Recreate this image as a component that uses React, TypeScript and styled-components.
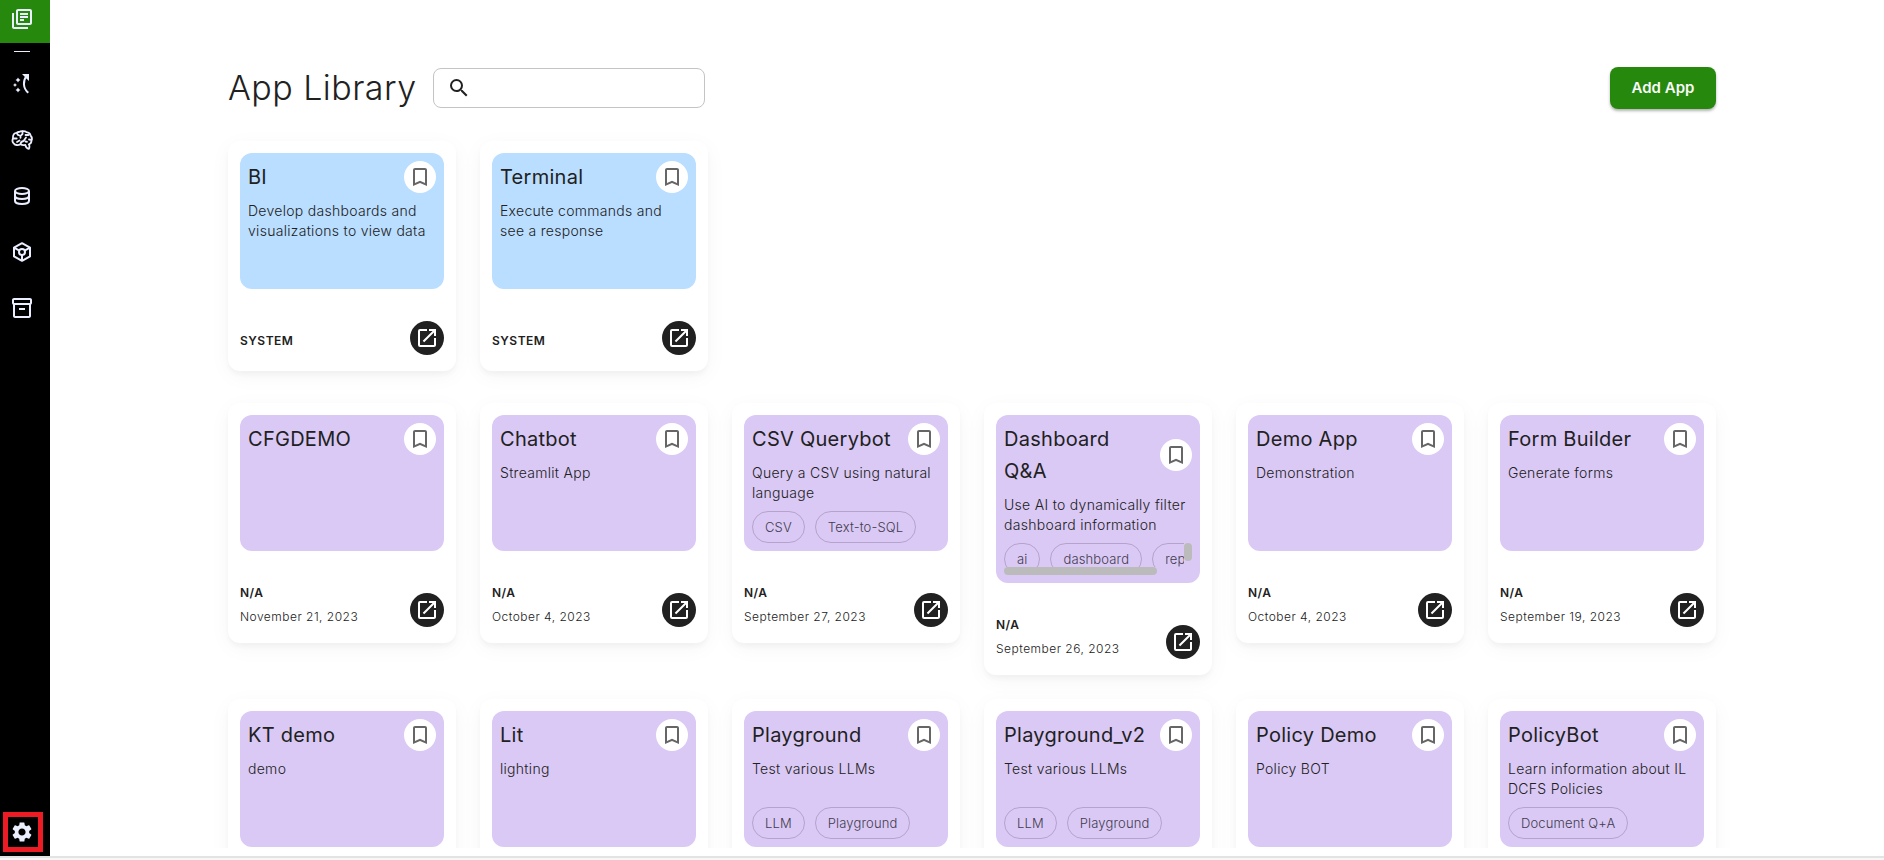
import React from 'react';
import styled, { createGlobalStyle } from 'styled-components';
import {
  MdOutlineLibraryBooks,
  MdSettings,
  MdOutlineInventory2,
  MdSearch,
  MdBookmarkBorder,
  MdOpenInNew,
} from 'react-icons/md';

const GlobalStyle = createGlobalStyle`
  *, *::before, *::after { box-sizing: border-box; }
  body {
    margin: 0;
    background: #fafafa;
    color: #212121;
    font-family: Inter, "Liberation Sans", sans-serif;
    overflow: hidden;
  }
  h1, h2, p { margin: 0; }
`;

const Page = styled.div`
  display: flex;
  flex-direction: column;
  height: 860px;
`;

const Shell = styled.div`
  display: flex;
  height: 856px;
  background: #fff;
`;

const BottomEdge = styled.div`
  height: 4px;
  background: #f7f7f7;
  border-top: 2px solid #e3e3e3;
`;

const Sidebar = styled.nav`
  display: flex;
  flex-direction: column;
  width: 50px;
  background: #000;
  color: #ebeeff;
`;

const NavItem = styled.a<{ $active?: boolean }>`
  display: flex;
  align-items: center;
  height: ${p => (p.$active ? '43px' : '56px')};
  padding: ${p => (p.$active ? '0 0 5px 10px' : '0 0 0 10px')};
  background: ${p => (p.$active ? '#26890d' : 'transparent')};
  svg { display: block; width: 24px; height: 24px; }
`;

const NavDivider = styled.hr`
  width: 16px;
  height: 1px;
  margin: 8px 0 4px 14px;
  border: 0;
  background: #ebeeff;
`;

const SettingsItem = styled.a`
  display: flex;
  align-items: center;
  justify-content: center;
  width: 40px;
  height: 40px;
  margin: auto 0 4px 3px;
  padding-right: 2px;
  border: 5px solid #ed1c24;
  svg { display: block; flex: none; width: 24px; height: 24px; }
`;

const Main = styled.main`
  flex: 1;
  height: 848px;
  padding: 67px 168px 0 178px;
  overflow: hidden;
`;

const Header = styled.header`
  display: flex;
  align-items: center;
  height: 42px;
  margin-bottom: 32px;
`;

const PageTitle = styled.h1`
  width: 205px;
  font-size: 34px;
  font-weight: 300;
  line-height: 42px;
  letter-spacing: 0.45px;
  white-space: nowrap;
`;

const SearchBox = styled.label`
  display: flex;
  align-items: center;
  width: 272px;
  height: 40px;
  padding-left: 13px;
  border: 1px solid #c4c4c4;
  border-radius: 8px;
  svg { display: block; width: 24px; height: 24px; }
`;

const AddButton = styled.button`
  width: 106px;
  height: 42px;
  margin-left: auto;
  padding: 0;
  border: 0;
  border-radius: 8px;
  background: #26890d;
  box-shadow: 0 2px 3px rgba(0, 0, 0, 0.3);
  color: #fafafa;
  font: 600 15px/42px Inter, sans-serif;
`;

const CardGrid = styled.section`
  display: grid;
  grid-template-columns: repeat(6, 228px);
  gap: 24px;
  align-items: start;
  margin-bottom: 32px;
`;

const CardFrame = styled.article`
  padding: 12px 12px 16px;
  border-radius: 12px;
  background: #fff;
  box-shadow: 0 5px 22px rgba(0, 0, 0, 0.04), 0 4px 4px rgba(0, 0, 0, 0.03);
`;

const Cover = styled.div<{ $system?: boolean }>`
  display: flex;
  flex-direction: column;
  gap: 8px;
  padding: 8px;
  border-radius: 12px;
  background: ${p => (p.$system ? '#badeff' : '#dac9f5')};
`;

const CoverHeader = styled.div`
  display: flex;
  align-items: center;
  justify-content: space-between;
`;

const AppName = styled.h2`
  padding-right: 8px;
  font-size: 20px;
  font-weight: 400;
  line-height: 32px;
  letter-spacing: 0.27px;
`;

const BookmarkButton = styled.span`
  display: flex;
  flex: none;
  align-items: center;
  justify-content: center;
  width: 32px;
  height: 32px;
  border-radius: 50%;
  background: #fff;
  color: #666;
  svg { width: 24px; height: 24px; }
`;

const Description = styled.p`
  height: 40px;
  font-size: 14px;
  font-weight: 300;
  line-height: 20px;
  letter-spacing: 0.29px;
`;

const TagRow = styled.div`
  position: relative;
  display: flex;
  gap: 10px;
  height: 32px;
  overflow: hidden;
`;

const Tag = styled.span`
  flex: none;
  height: 32px;
  padding: 0 12px;
  border: 1px solid #b5a3cc;
  border-radius: 16px;
  color: #423c4e;
  font-size: 13px;
  font-weight: 300;
  line-height: 31px;
  letter-spacing: 0.14px;
  white-space: nowrap;
`;

const ScrollThumb = styled.span<{ $axis: 'x' | 'y' }>`
  position: absolute;
  ${p =>
    p.$axis === 'x'
      ? 'left: 0; bottom: 0; width: 153px; height: 8px;'
      : 'right: 0; top: 0; width: 8px; height: 18px;'}
  border-radius: 4px;
  background: #bbb;
`;

const ScrollClip = styled.div`
  display: flex;
  gap: 10px;
  width: 180px;
  height: 24px;
  overflow: hidden;
`;

const CardFooter = styled.footer<{ $system?: boolean }>`
  display: flex;
  align-items: flex-end;
  justify-content: space-between;
  height: ${p => (p.$system ? '66px' : '76px')};
`;

const Meta = styled.div<{ $system?: boolean }>`
  margin-bottom: ${p => (p.$system ? '2px' : '-2px')};
  font-size: 12px;
  line-height: 24px;
  white-space: nowrap;
`;

const Owner = styled.p`
  font-weight: 600;
  letter-spacing: 0.5px;
`;

const Published = styled.p`
  font-weight: 300;
  letter-spacing: 0.48px;
`;

const OpenButton = styled.span`
  display: flex;
  align-items: center;
  justify-content: center;
  width: 34px;
  height: 34px;
  margin-left: auto;
  border-radius: 50%;
  background: #212121;
  color: #fff;
  svg { width: 24px; height: 24px; }
`;

const PathIcon = () => (
  <svg viewBox="0 0 24 24" fill="currentColor">
    <path d="M12 2h7v7l-2.600-2.600z" />
    <path d="M16.500 4C12.800 9 12.800 16 18.300 20.800" fill="none" stroke="currentColor" strokeWidth="2" />
    <path d="M8 5.500l.9 1.600 1.600.9-1.600.9L8 10.500l-.9-1.600-1.600-.9 1.600-.9zM8 15.500l.9 1.600 1.600.9-1.600.9-.9 1.600-.9-1.600-1.600-.9 1.600-.9zM5 11l.7 1.300 1.300.7-1.300.7L5 15l-.7-1.300L3 13l1.300-.7z" />
  </svg>
);

const BrainIcon = () => (
  <svg viewBox="0 0 24 24" fill="none" stroke="currentColor" strokeWidth="1.800" strokeLinecap="round" strokeLinejoin="round">
    <path d="M9 4C11 2.700 15 2.800 16.500 4.200c2 .3 3.600 1.300 4 3.100C22 9 22.300 11 21.500 12.700c-.1 2-1.200 3.200-2.700 3.600.9 1.200.8 3.700 0 4.600-1.800-.2-3-1.500-3.500-4-1.800.5-3.400.4-4.800-.6-2.300 1.200-5.500 1-6.700-.9C2.500 14.500 2.300 12 3 10 2.700 7 4.300 4.900 6.500 4.900 7.200 4.300 8 4 9 4z" />
    <path d="M7 5.500c.3 1.200 1 1.700 2.200 1.900M3.500 10.500h3.200M12.500 3.500V6l-2 1.800v2M10.500 16c.2-2 1.500-2.700 3-3l2.500-3.500M15.500 7h3M15.500 13.500l1.500.3M19 11.500l2 .3M7 14l2.500-1.500" />
  </svg>
);

const DatabaseIcon = () => (
  <svg viewBox="0 0 24 24" fill="none" stroke="currentColor" strokeWidth="2">
    <ellipse cx="12" cy="7" rx="7" ry="3" />
    <path d="M5 7v10c0 1.700 3.100 3 7 3s7-1.300 7-3V7M5 12c0 1.700 3.100 3 7 3s7-1.300 7-3" />
  </svg>
);

const CubeIcon = () => (
  <svg viewBox="0 0 24 24" fill="none" stroke="currentColor" strokeWidth="2" strokeLinejoin="round">
    <path d="M12 3.200l8 4.400v8.800l-8 4.400-8-4.400V7.600z" />
    <circle cx="12" cy="12" r="3" />
    <path d="M4 7.600l5.400 3M20 7.600l-5.400 3M12 15v5.800" />
  </svg>
);

interface AppInfo {
  name: string;
  description?: string;
  tags?: string[];
  date?: string;
  system?: boolean;
  scrollable?: boolean;
}

const systemApps: AppInfo[] = [
  { name: 'BI', description: 'Develop dashboards and visualizations to view data', system: true },
  { name: 'Terminal', description: 'Execute commands and see a response', system: true },
];

const libraryApps: AppInfo[] = [
  { name: 'CFGDEMO', date: 'November 21, 2023' },
  { name: 'Chatbot', description: 'Streamlit App', date: 'October 4, 2023' },
  { name: 'CSV Querybot', description: 'Query a CSV using natural language', tags: ['CSV', 'Text-to-SQL'], date: 'September 27, 2023' },
  { name: 'Dashboard Q&A', description: 'Use AI to dynamically filter dashboard information', tags: ['ai', 'dashboard', 'report'], date: 'September 26, 2023', scrollable: true },
  { name: 'Demo App', description: 'Demonstration', date: 'October 4, 2023' },
  { name: 'Form Builder', description: 'Generate forms', date: 'September 19, 2023' },
  { name: 'KT demo', description: 'demo' },
  { name: 'Lit', description: 'lighting' },
  { name: 'Playground', description: 'Test various LLMs', tags: ['LLM', 'Playground'] },
  { name: 'Playground_v2', description: 'Test various LLMs', tags: ['LLM', 'Playground'] },
  { name: 'Policy Demo', description: 'Policy BOT' },
  { name: 'PolicyBot', description: 'Learn information about IL DCFS Policies', tags: ['Document Q+A'] },
];

const AppCard = ({ app }: { app: AppInfo }) => {
  const tags = (app.tags ?? []).map(tag => <Tag key={tag}>{tag}</Tag>);
  return (
    <CardFrame>
      <Cover $system={app.system}>
        <CoverHeader>
          <AppName>{app.name}</AppName>
          <BookmarkButton><MdBookmarkBorder /></BookmarkButton>
        </CoverHeader>
        <Description>{app.description}</Description>
        <TagRow>
          {app.scrollable ? (
            <>
              <ScrollClip>{tags}</ScrollClip>
              <ScrollThumb $axis="x" />
              <ScrollThumb $axis="y" />
            </>
          ) : tags}
        </TagRow>
      </Cover>
      <CardFooter $system={app.system}>
        {(app.system || app.date) && (
          <Meta $system={app.system}>
            <Owner>{app.system ? 'SYSTEM' : 'N/A'}</Owner>
            {app.date && <Published>{app.date}</Published>}
          </Meta>
        )}
        <OpenButton><MdOpenInNew /></OpenButton>
      </CardFooter>
    </CardFrame>
  );
};

export default function App() {
  return (
    <Page>
      <GlobalStyle />
      <Shell>
        <Sidebar>
          <NavItem $active><MdOutlineLibraryBooks /></NavItem>
          <NavDivider />
          <NavItem><PathIcon /></NavItem>
          <NavItem><BrainIcon /></NavItem>
          <NavItem><DatabaseIcon /></NavItem>
          <NavItem><CubeIcon /></NavItem>
          <NavItem><MdOutlineInventory2 /></NavItem>
          <SettingsItem><MdSettings /></SettingsItem>
        </Sidebar>
        <Main>
          <Header>
            <PageTitle>App Library</PageTitle>
            <SearchBox><MdSearch /></SearchBox>
            <AddButton>Add App</AddButton>
          </Header>
          <CardGrid>
            {systemApps.map(app => <AppCard key={app.name} app={app} />)}
          </CardGrid>
          <CardGrid>
            {libraryApps.map(app => <AppCard key={app.name} app={app} />)}
          </CardGrid>
        </Main>
      </Shell>
      <BottomEdge />
    </Page>
  );
}
